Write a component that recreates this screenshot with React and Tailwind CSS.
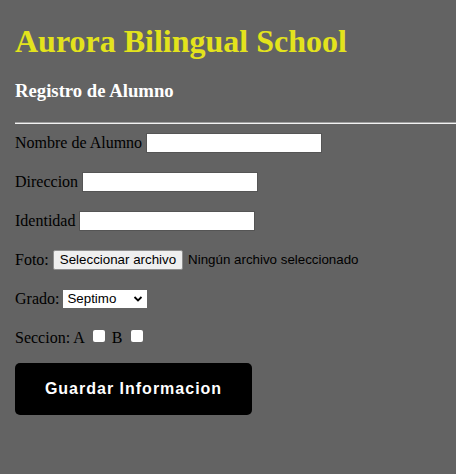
import React from "react";

const serif = { fontFamily: '"Liberation Serif", "Times New Roman", serif' };
const sans = { fontFamily: '"Liberation Sans", Arial, sans-serif' };

function TextRow({ label }) {
  return (
    <div className="flex items-center h-[22px] text-[16px] text-black">
      <span>{label}</span>
      <input
        type="text"
        className="ml-[4px] w-[176px] h-[20px] bg-white border border-[#555555] outline-none"
      />
    </div>
  );
}

export default function App() {
  return (
    <div className="min-h-[474px] bg-[#636363] pl-[15px] pt-[21px] overflow-hidden" style={serif}>
      <h1 className="text-[32px] leading-[40px] font-bold text-[#e3e31c] m-0">
        Aurora Bilingual School
      </h1>
      <h3 className="mt-[19px] text-[18.72px] leading-[22px] font-bold text-white">
        Registro de Alumno
      </h3>
      <div className="mt-[20px] h-[2px] border-t border-t-[#a0a0a0] border-b border-b-[#f2f2f2]" />
      <div className="mt-[8px] flex flex-col gap-[17px]">
        <TextRow label="Nombre de Alumno" />
        <TextRow label="Direccion" />
        <TextRow label="Identidad" />
        <div className="flex items-center h-[22px] text-[16px] text-black">
          <span>Foto:</span>
          <div
            className="ml-[4px] h-[20px] px-[6px] flex items-center bg-[#efefef] border border-[#8f8f8f] rounded-[2px] text-[13.33px] text-black"
            style={sans}
          >
            Seleccionar archivo
          </div>
          <span className="ml-[5px] text-[13.33px] text-black" style={sans}>
            Ningún archivo seleccionado
          </span>
        </div>
        <div className="flex items-center h-[22px] text-[16px] text-black">
          <span>Grado:</span>
          <div
            className="ml-[4px] w-[84px] h-[18px] bg-white flex items-center justify-between pl-[4px] pr-[4px] text-[13.33px] text-black"
            style={sans}
          >
            <span>Septimo</span>
            <svg width="10" height="10" viewBox="0 0 10 10">
              <path d="M1.5 3 L5 6.5 L8.5 3" fill="none" stroke="black" strokeWidth="1.8" />
            </svg>
          </div>
        </div>
        <div className="flex items-center h-[22px] text-[16px] text-black">
          <span>Seccion: A</span>
          <span className="ml-[8px] mb-[5px] w-[12px] h-[12px] bg-white rounded-[2px]" />
          <span className="ml-[7px]">B</span>
          <span className="ml-[9px] mb-[5px] w-[12px] h-[12px] bg-white rounded-[2px]" />
        </div>
      </div>
      <button
        className="mt-[14px] w-[237px] h-[52px] bg-black rounded-[5px] text-white text-[16px] font-bold tracking-[1px] flex items-center justify-center"
        style={sans}
      >
        Guardar Informacion
      </button>
    </div>
  );
}
